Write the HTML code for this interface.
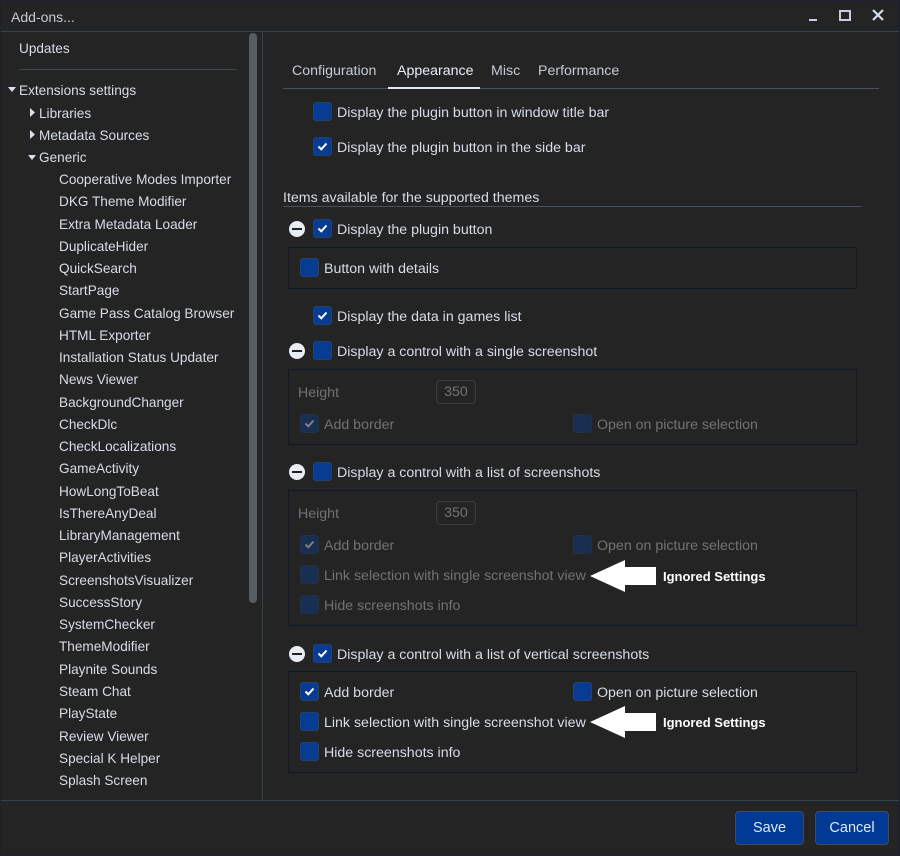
<!DOCTYPE html>
<html><head><meta charset="utf-8"><style>
*{margin:0;padding:0;box-sizing:border-box}
body{width:900px;height:856px;background:#242424;font-family:"Liberation Sans",sans-serif;font-size:14.2px;color:#d6dde6;position:relative;overflow:hidden}
.t{position:absolute;white-space:nowrap;line-height:16px;transform:translateY(-7px)}
.cb{position:absolute;width:19px;height:19px;background:#083c93;border:1px solid #24426e;border-radius:3px}
.cb svg{position:absolute;left:3px;top:3px}
.dim{opacity:.42}
.box{position:absolute;border:1px solid #0f1828;background:#242424}
.min{position:absolute;width:16px;height:16px;border-radius:50%;background:#e8ecf4}
.min:after{content:"";position:absolute;left:3px;top:7px;width:10px;height:2px;background:#222}
.ig{position:absolute;font-family:"Liberation Sans",sans-serif;font-weight:bold;font-size:13px;color:#fff;transform:translateY(-7px);line-height:16px}
.inp{position:absolute;width:40px;height:24px;border:1px solid #555d66;border-radius:4px;text-align:center;line-height:22px}
.hl{position:absolute;height:1px;background:#2d4650}
.btn{position:absolute;height:34px;background:#003a95;border:1px solid #3c4a5e;border-radius:4px;text-align:center;line-height:33px;font-size:14.5px;color:#e0e8f2}
.sb{font-size:13.6px}
</style></head><body>
<div style="position:absolute;inset:0;border:1px solid #1b2130"></div>
<div class="t" style="left:11px;top:16px;color:#c4ccd4;font-size:14px">Add-ons...</div>
<div style="position:absolute;left:809px;top:19px;width:8px;height:2px;background:#ccd"></div>
<div style="position:absolute;left:839px;top:10px;width:12px;height:11px;border:2px solid #ccd"></div>
<svg style="position:absolute;left:871px;top:8px" width="14" height="14"><path d="M2 2L12 12M12 2L2 12" stroke="#d0dcea" stroke-width="2.2"/></svg>
<div class="hl" style="left:1px;top:31px;width:898px"></div>
<div style="position:absolute;left:262px;top:32px;width:1px;height:768px;background:#2d4650"></div>
<div style="position:absolute;left:249px;top:33px;width:8px;height:570px;background:#585c64;border-radius:4px"></div>
<div class="hl" style="left:1px;top:800px;width:898px"></div>

<div class="t sb" style="left:19px;top:48px">Updates</div>
<div style="position:absolute;left:19px;top:69px;width:218px;height:1px;background:#3a4a50"></div>
<svg style="position:absolute;left:8px;top:87px" width="8" height="6"><path d="M0 0H8L4 5Z" fill="#dde"/></svg>
<div class="t sb" style="left:19px;top:90px">Extensions settings</div>
<svg style="position:absolute;left:30px;top:108px" width="6" height="9"><path d="M0 0V9L5 4.5Z" fill="#dde"/></svg>
<div class="t sb" style="left:39px;top:113px">Libraries</div>
<svg style="position:absolute;left:30px;top:130px" width="6" height="9"><path d="M0 0V9L5 4.5Z" fill="#dde"/></svg>
<div class="t sb" style="left:39px;top:135px">Metadata Sources</div>
<svg style="position:absolute;left:28px;top:155px" width="8" height="6"><path d="M0 0H8L4 5Z" fill="#dde"/></svg>
<div class="t sb" style="left:39px;top:157px">Generic</div>
<div id="list"></div>

<div class="t" style="left:292px;top:70px;color:#c4ccd4">Configuration</div>
<div class="t" style="left:397px;top:70px;color:#e8eef6">Appearance</div>
<div class="t" style="left:491px;top:70px;color:#c4ccd4">Misc</div>
<div class="t" style="left:538px;top:70px;color:#c4ccd4">Performance</div>
<div style="position:absolute;left:283px;top:88px;width:596px;height:1px;background:#48525c"></div>
<div style="position:absolute;left:388px;top:87px;width:92px;height:2px;background:#dfe6f4"></div>

<div class="t" style="left:283px;top:197px">Items available for the supported themes</div>
<div style="position:absolute;left:283px;top:206px;width:579px;height:1px;background:#48525c"></div>

<div class="box" style="left:288px;top:247px;width:569px;height:42px"></div>
<div class="box" style="left:288px;top:369px;width:569px;height:76px"></div>
<div class="box" style="left:288px;top:490px;width:569px;height:136px"></div>
<div class="box" style="left:288px;top:671px;width:569px;height:102px"></div>

<div class="min" style="left:289px;top:221px"></div>
<div class="min" style="left:289px;top:343px"></div>
<div class="min" style="left:289px;top:464px"></div>
<div class="min" style="left:289px;top:646px"></div>

<div class="inp dim" style="left:436px;top:380px">350</div>
<div class="t dim" style="left:298px;top:392px">Height</div>
<div class="inp dim" style="left:436px;top:501px">350</div>
<div class="t dim" style="left:298px;top:513px">Height</div>

<div id="cbs"></div>

<svg style="position:absolute;left:590px;top:559px" width="66" height="34"><path d="M0 17L35 1V8H66V26H35V33Z" fill="#fff"/></svg>
<div class="ig" style="left:663px;top:576px">Ignored Settings</div>
<svg style="position:absolute;left:590px;top:705px" width="66" height="34"><path d="M0 17L35 1V8H66V26H35V33Z" fill="#fff"/></svg>
<div class="ig" style="left:663px;top:722px">Ignored Settings</div>

<div class="btn" style="left:735px;top:811px;width:69px">Save</div>
<div class="btn" style="left:815px;top:811px;width:74px">Cancel</div>

<script>
var items=["Cooperative Modes Importer","DKG Theme Modifier","Extra Metadata Loader","DuplicateHider","QuickSearch","StartPage","Game Pass Catalog Browser","HTML Exporter","Installation Status Updater","News Viewer","BackgroundChanger","CheckDlc","CheckLocalizations","GameActivity","HowLongToBeat","IsThereAnyDeal","LibraryManagement","PlayerActivities","ScreenshotsVisualizer","SuccessStory","SystemChecker","ThemeModifier","Playnite Sounds","Steam Chat","PlayState","Review Viewer","Special K Helper","Splash Screen"];
var h="";items.forEach(function(s,i){h+='<div class="t sb" style="left:59px;top:'+(179+i*22.26)+'px">'+s+'</div>';});
document.getElementById("list").outerHTML=h;
var chk='<svg width="11" height="11"><path d="M1.5 5.5L4.3 8.3L9.5 2.5" stroke="#fff" stroke-width="2" fill="none"/></svg>';
var c=[[313,112,0,"Display the plugin button in window title bar",0],[313,147,1,"Display the plugin button in the side bar",0],
[313,229,1,"Display the plugin button",0],[300,268,0,"Button with details",0],[313,316,1,"Display the data in games list",0],
[313,351,0,"Display a control with a single screenshot",0],[300,424,1,"Add border",1],[573,424,0,"Open on picture selection",1],
[313,472,0,"Display a control with a list of screenshots",0],[300,545,1,"Add border",1],[573,545,0,"Open on picture selection",1],
[300,575,0,"Link selection with single screenshot view",1],[300,605,0,"Hide screenshots info",1],
[313,654,1,"Display a control with a list of vertical screenshots",0],[300,692,1,"Add border",0],[573,692,0,"Open on picture selection",0],
[300,722,0,"Link selection with single screenshot view",0],[300,752,0,"Hide screenshots info",0]];
h="";c.forEach(function(r){var d=r[4]?" dim":"";h+='<div class="cb'+d+'" style="left:'+r[0]+'px;top:'+(r[1]-10)+'px">'+(r[2]?chk:"")+'</div><div class="t'+d+'" style="left:'+(r[0]+24)+'px;top:'+r[1]+'px">'+r[3]+'</div>';});
document.getElementById("cbs").outerHTML=h;
</script>
</body></html>
